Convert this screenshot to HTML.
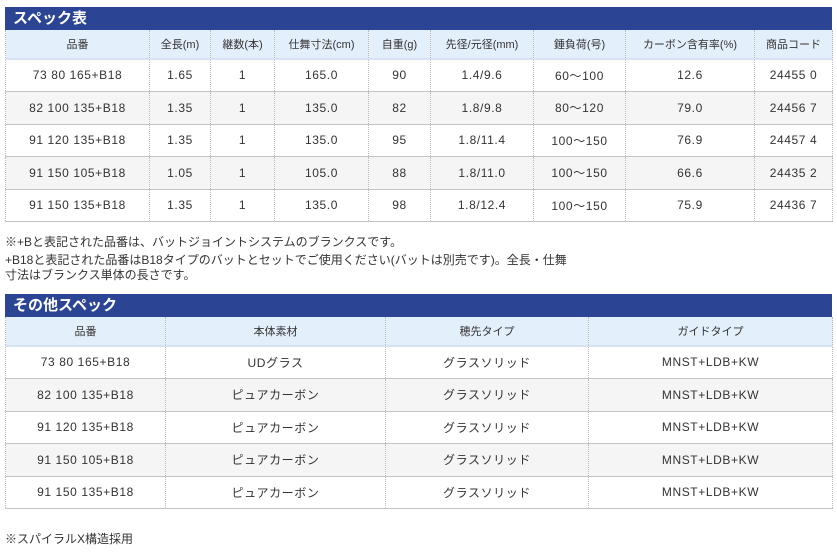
<!DOCTYPE html>
<html><head><meta charset="utf-8"><style>
body{margin:0;width:837px;height:552px;background:#fff;font-family:"Liberation Sans","Noto Sans CJK JP",sans-serif;color:#333;position:relative;overflow:hidden}
.bar{position:absolute;left:5px;width:827px;height:23px;background:#2b4594;color:#fff;font-weight:bold;font-size:15px;line-height:23px;box-sizing:border-box;padding-left:8px}
table{position:absolute;left:5px;width:827px;border-collapse:collapse;table-layout:fixed}
td,th{text-align:center;font-size:12px;font-weight:normal;border-left:1px dotted #bbb;border-right:1px dotted #bbb;border-bottom:1px solid #c4c4c4;padding:0;color:#333}
td{letter-spacing:0.6px}
th{background:#e4effc;font-size:11px;border-bottom:2px solid #d5e2f3;height:28px}
tr:nth-child(odd) td{background:#f5f5f5}
.n{position:absolute;left:5px;font-size:12px;color:#333;white-space:nowrap}
</style></head><body>
<div class="bar" style="top:7px">スペック表</div>
<table style="top:30px">
<colgroup><col style="width:144px"><col style="width:61px"><col style="width:64px"><col style="width:94px"><col style="width:62px"><col style="width:103px"><col style="width:92px"><col style="width:129px"><col style="width:78px"></colgroup>
<tr><th>品番</th><th>全長(m)</th><th>継数(本)</th><th>仕舞寸法(cm)</th><th>自重(g)</th><th>先径/元径(mm)</th><th>錘負荷(号)</th><th>カーボン含有率(%)</th><th>商品コード</th></tr>
<tr style="height:32px"><td>73 80 165+B18</td><td>1.65</td><td>1</td><td>165.0</td><td>90</td><td>1.4/9.6</td><td>60～100</td><td>12.6</td><td>24455 0</td></tr>
<tr style="height:33px"><td>82 100 135+B18</td><td>1.35</td><td>1</td><td>135.0</td><td>82</td><td>1.8/9.8</td><td>80～120</td><td>79.0</td><td>24456 7</td></tr>
<tr style="height:32px"><td>91 120 135+B18</td><td>1.35</td><td>1</td><td>135.0</td><td>95</td><td>1.8/11.4</td><td>100～150</td><td>76.9</td><td>24457 4</td></tr>
<tr style="height:33px"><td>91 150 105+B18</td><td>1.05</td><td>1</td><td>105.0</td><td>88</td><td>1.8/11.0</td><td>100～150</td><td>66.6</td><td>24435 2</td></tr>
<tr style="height:32px"><td>91 150 135+B18</td><td>1.35</td><td>1</td><td>135.0</td><td>98</td><td>1.8/12.4</td><td>100～150</td><td>75.9</td><td>24436 7</td></tr>
</table>
<div class="n" style="top:233px">※+Bと表記された品番は、バットジョイントシステムのブランクスです。</div>
<div class="n" style="top:251px">+B18と表記された品番はB18タイプのバットとセットでご使用ください(バットは別売です)。全長・仕舞</div>
<div class="n" style="top:266px">寸法はブランクス単体の長さです。</div>
<div class="bar" style="top:294px">その他スペック</div>
<table style="top:317px">
<colgroup><col style="width:160px"><col style="width:220px"><col style="width:203px"><col style="width:244px"></colgroup>
<tr><th>品番</th><th>本体素材</th><th>穂先タイプ</th><th>ガイドタイプ</th></tr>
<tr style="height:32px"><td>73 80 165+B18</td><td>UDグラス</td><td>グラスソリッド</td><td>MNST+LDB+KW</td></tr>
<tr style="height:33px"><td>82 100 135+B18</td><td>ピュアカーボン</td><td>グラスソリッド</td><td>MNST+LDB+KW</td></tr>
<tr style="height:32px"><td>91 120 135+B18</td><td>ピュアカーボン</td><td>グラスソリッド</td><td>MNST+LDB+KW</td></tr>
<tr style="height:33px"><td>91 150 105+B18</td><td>ピュアカーボン</td><td>グラスソリッド</td><td>MNST+LDB+KW</td></tr>
<tr style="height:32px"><td>91 150 135+B18</td><td>ピュアカーボン</td><td>グラスソリッド</td><td>MNST+LDB+KW</td></tr>
</table>
<div class="n" style="top:530px">※スパイラルX構造採用</div>
</body></html>
